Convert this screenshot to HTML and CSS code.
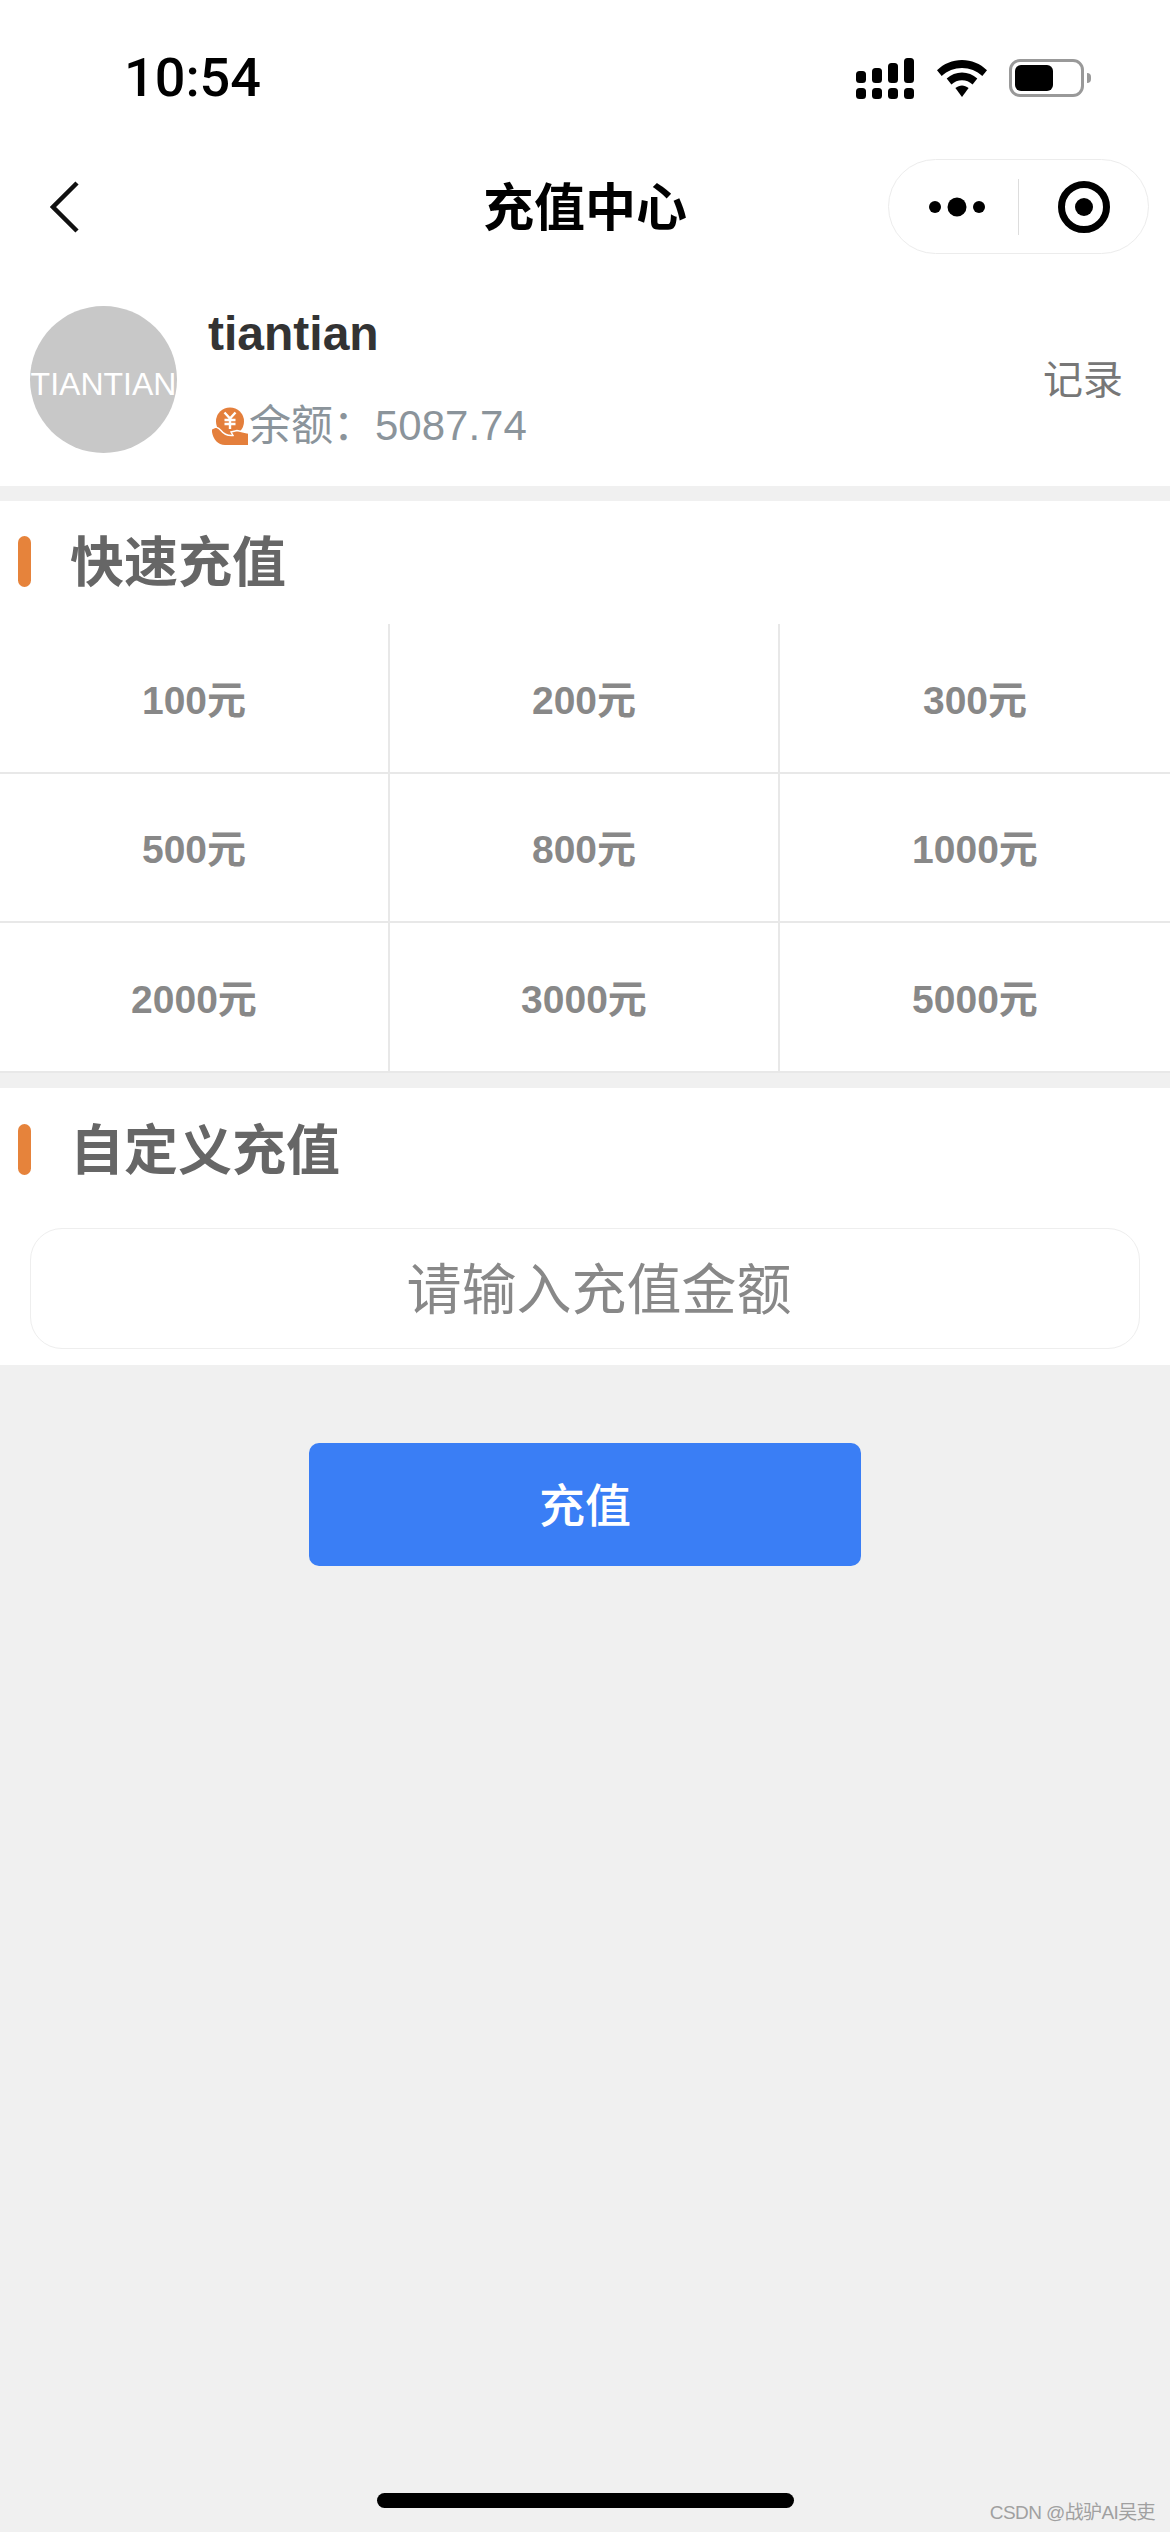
FILE: index.html
```html
<!DOCTYPE html>
<html lang="zh">
<head>
<meta charset="utf-8">
<title>充值中心</title>
<link rel="stylesheet" href="styles.css">
</head>
<body>
<div class="page">
  <header class="top">
    <div class="status">
      <span class="time">10:54</span>
      <div class="status-icons">
        <svg class="signal" width="58" height="41" viewBox="0 0 58 41"><g fill="#000"><rect x="0" y="13" width="10" height="12" rx="3.500"/><rect x="16" y="10" width="10" height="15" rx="3.500"/><rect x="32" y="5" width="10" height="20" rx="3.500"/><rect x="48" y="0" width="10" height="25" rx="3.500"/><rect x="0" y="30" width="10" height="11" rx="3.500"/><rect x="16" y="30" width="10" height="11" rx="3.500"/><rect x="32" y="30" width="10" height="11" rx="3.500"/><rect x="48" y="30" width="10" height="11" rx="3.500"/></g></svg>
        <svg class="wifi" width="50" height="37" viewBox="0 0 50 37"><path d="M25 0C15.500 0 6.900 3.700 0 10.200L4.700 16C10.300 10.800 17.400 8 25 8S39.700 10.800 45.300 16L50 10.200C43.100 3.700 34.500 0 25 0Z" fill="#000"/><path d="M25 12.500C19.300 12.500 14 14.700 9.700 18.600L14.400 24.500C17.400 21.800 21 20.300 25 20.300S32.600 21.800 35.600 24.500L40.300 18.600C36 14.700 30.700 12.500 25 12.500Z" fill="#000"/><path d="M25 25.500C22.700 25.500 20.600 26.400 18.400 28L25 37L31.600 28C29.400 26.400 27.300 25.500 25 25.500Z" fill="#000"/></svg>
        <div class="battery"><div class="battery-body"><div class="battery-fill"></div></div><div class="battery-nub"></div></div>
      </div>
    </div>
    <nav class="nav">
      <div class="nav-left">
        <svg class="back" width="30" height="52" viewBox="0 0 30 52"><path d="M27 2L3 26L27 50" fill="none" stroke="#111" stroke-width="4.500"/></svg>
      </div>
      <div class="nav-title">充值中心</div>
      <div class="nav-right">
        <div class="capsule">
          <div class="capsule-dots">
            <svg width="56" height="20" viewBox="0 0 56 20"><circle cx="6" cy="10" r="6"/><circle cx="28" cy="10" r="9.500"/><circle cx="50" cy="10" r="6"/></svg>
          </div>
          <div class="capsule-line"></div>
          <div class="capsule-rec">
            <svg width="52" height="52" viewBox="0 0 52 52"><circle cx="26" cy="26" r="22.500" fill="none" stroke="#000" stroke-width="7"/><circle cx="26" cy="26" r="9"/></svg>
          </div>
        </div>
      </div>
    </nav>
    <section class="profile">
      <div class="avatar">TIANTIAN</div>
      <div class="info">
        <div class="name">tiantian</div>
        <div class="balance">
          <svg class="coin" width="36" height="37" viewBox="0 0 36 37">
            <circle cx="18" cy="13.500" r="14" fill="#e47f3c"/>
            <path d="M12.500 4.500L18 10.500L23.500 4.500M18 10.500V21M12.500 12H23.500M12.500 16H23.500" fill="none" stroke="#fff" stroke-width="2.400"/>
            <path d="M0 21C3 18 6 19 9 22.500C12 26.500 15 28 21 27.500L19 24L25 22.500L36 25V37H13C6 37 1 31 0 24Z" fill="#e47f3c"/>
            <path d="M0 21C3 18 6 19 9 22.500C12 26.500 15 28 21 27.500L19 24L25 22.500L36 25" fill="none" stroke="#fff" stroke-width="1.400"/>
          </svg>
          <span>余额：</span><span>5087.74</span>
        </div>
      </div>
      <div class="record">记录</div>
    </section>
  </header>

  <section class="card">
    <h2 class="sec-title"><i class="bar"></i><span class="sec-text">快速充值</span></h2>
    <div class="grid">
      <div class="cell">100元</div>
      <div class="cell">200元</div>
      <div class="cell">300元</div>
      <div class="cell">500元</div>
      <div class="cell">800元</div>
      <div class="cell">1000元</div>
      <div class="cell">2000元</div>
      <div class="cell">3000元</div>
      <div class="cell">5000元</div>
    </div>
  </section>

  <section class="card custom">
    <h2 class="sec-title sec-title-custom"><i class="bar"></i><span class="sec-text">自定义充值</span></h2>
    <div class="amount"><span class="amount-text">请输入充值金额</span></div>
  </section>

  <div class="submit"><span class="submit-text">充值</span></div>

  <div class="home-wrap"><div class="home-bar"></div></div>
  <div class="watermark">CSDN @战驴AI吴吏</div>
</div>
</body>
</html>
```

FILE: styles.css
```css
* { box-sizing: border-box; }
html, body { margin: 0; padding: 0; }
body {
  width: 1170px;
  height: 2532px;
  overflow: hidden;
  background: #f0f0f0;
  font-family: "Liberation Sans", "Noto Sans CJK SC", sans-serif;
}
.page {
  position: relative;
  height: 2532px;
  display: flex;
  flex-direction: column;
}
.top { background: #fff; height: 486px; }
.status {
  height: 159px;
  padding: 0 79px 3px 124px;
  display: flex;
  align-items: center;
  justify-content: space-between;
}
.time {
  font-family: Roboto, sans-serif;
  font-size: 54px;
  font-weight: 500;
  color: #000;
  line-height: 1;
}
.status-icons { display: flex; align-items: center; }
.signal { display: block; margin-right: 23px; }
.wifi { display: block; margin-right: 22px; }
.battery { display: flex; align-items: center; }
.battery-body {
  width: 75px;
  height: 38px;
  border: 3px solid #999;
  border-radius: 11px;
  padding: 3px;
}
.battery-fill { width: 38px; height: 100%; background: #000; border-radius: 6px; }
.battery-nub {
  width: 4px;
  height: 10px;
  margin-left: 3px;
  background: #999;
  border-radius: 0 4px 4px 0;
}
.nav {
  height: 95px;
  display: grid;
  grid-template-columns: 1fr auto 1fr;
  align-items: center;
}
.nav-left { padding-left: 50px; }
.back { display: block; }
.nav-title {
  font-size: 51px;
  font-weight: 700;
  color: #000;
  line-height: 1;
  padding-top: 3px;
}
.nav-right { display: flex; justify-content: flex-end; padding-right: 21px; }
.capsule {
  width: 261px;
  height: 95px;
  border: 1.500px solid #ececec;
  border-radius: 48px;
  display: flex;
  align-items: center;
}
.capsule-dots { width: 129px; padding-left: 40px; }
.capsule-dots svg { display: block; }
.capsule-line { width: 1px; height: 56px; background: #ddd; }
.capsule-rec { flex: 1; padding-left: 39px; }
.capsule-rec svg { display: block; }
.profile {
  height: 232px;
  padding: 52px 47px 33px 30px;
  display: flex;
  align-items: center;
}
.avatar {
  width: 147px;
  height: 147px;
  flex: none;
  border-radius: 50%;
  background: #c8c8c8;
  color: #fff;
  font-size: 32px;
  line-height: 156px;
  text-align: center;
  overflow: hidden;
  white-space: nowrap;
}
.info {
  flex: 1;
  margin-left: 31px;
  align-self: flex-start;
  padding-top: 4px;
}
.name {
  font-size: 48px;
  font-weight: 700;
  color: #333;
  line-height: 48px;
}
.balance {
  margin-top: 46px;
  display: flex;
  align-items: center;
  font-size: 42px;
  line-height: 44px;
  color: #8b949b;
}
.coin { display: block; margin: 0 1px 0 4px; flex: none; overflow: visible; }
.record { font-size: 40px; line-height: 44px; color: #777; }

.card { background: #fff; margin-top: 15px; }
.sec-title {
  margin: 0;
  height: 123px;
  padding: 35px 0 37px 18px;
  display: flex;
  align-items: center;
}
.sec-title-custom { height: 140px; padding-top: 36px; padding-bottom: 53px; }
.bar {
  display: block;
  width: 13px;
  height: 51px;
  border-radius: 7px;
  background: #e6833b;
  flex: none;
}
.sec-text {
  margin-left: 39px;
  font-size: 54px;
  line-height: 1;
  font-weight: 700;
  color: #666;
  padding-top: 3px;
}
.grid {
  height: 449px;
  display: grid;
  grid-template-columns: repeat(3, 1fr);
  grid-template-rows: repeat(3, 1fr);
}
.cell {
  display: flex;
  align-items: center;
  justify-content: center;
  font-size: 39px;
  font-weight: 700;
  color: #888;
  padding-bottom: 2px;
  border-bottom: 2px solid #e8e8e8;
  border-right: 2px solid #e8e8e8;
}
.cell:nth-child(3n) { border-right: 0; }
.custom { padding-bottom: 16px; }
.amount {
  height: 121px;
  margin: 0 30px;
  padding-left: 28px;
  border: 1.500px solid #eee;
  border-radius: 32px;
  display: flex;
  align-items: center;
  justify-content: center;
  font-size: 55px;
  color: #888;
}
.amount-text { margin-top: -8px; }
.submit {
  width: 552px;
  height: 123px;
  margin: 78px auto 0;
  border-radius: 10px;
  background: #3a7ef5;
  color: #fff;
  font-size: 46px;
  font-weight: 500;
  display: flex;
  align-items: center;
  justify-content: center;
}
.submit-text { margin-top: -6px; }
.home-wrap { margin-top: auto; padding-bottom: 24px; display: flex; justify-content: center; }
.home-bar { width: 417px; height: 15px; border-radius: 8px; background: #000; }
.watermark {
  position: absolute;
  right: 15px;
  bottom: 8px;
  font-size: 19px;
  line-height: 22px;
  color: #a0a0a0;
  letter-spacing: -0.600px;
}
```
